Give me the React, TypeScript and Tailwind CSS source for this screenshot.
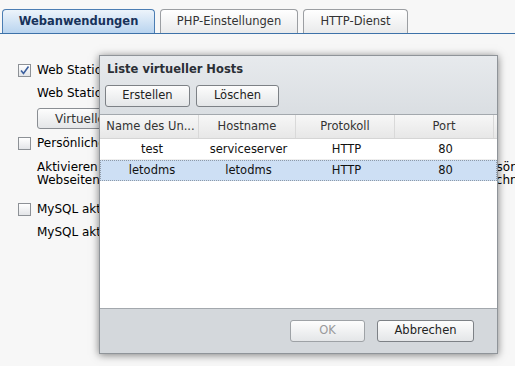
import React from "react";

function CheckBox({ checked }: { checked?: boolean }) {
  return (
    <span className="flex h-[13px] w-[13px] items-center justify-center border border-[#8d9196] bg-gradient-to-b from-[#ffffff] to-[#e3e5e8]">
      {checked && (
        <svg width="11" height="11" viewBox="0 0 11 11">
          <path d="M2 5.5 L4.5 8.5 L9.5 1.5" fill="none" stroke="#3b5f9e" strokeWidth="1.6" />
        </svg>
      )}
    </span>
  );
}

function Btn({ label, w, disabled }: { label: string; w: string; disabled?: boolean }) {
  return (
    <button
      className={
        "flex h-[22px] items-center justify-center rounded-[3px] border bg-gradient-to-b from-[#fdfdfd] to-[#e4e6e8] text-[11.5px] " +
        w +
        (disabled ? " border-[#9ea2a6] text-[#9a9a9a]" : " border-[#7d8186] text-[#222]")
      }
    >
      {label}
    </button>
  );
}

const cols = [
  { title: "Name des Un...", w: "w-[99px] pl-[3px]" },
  { title: "Hostname", w: "w-[97px]" },
  { title: "Protokoll", w: "w-[99px]" },
  { title: "Port", w: "w-[99px]" },
];

const rows = [
  ["test", "serviceserver", "HTTP", "80"],
  ["letodms", "letodms", "HTTP", "80"],
];

export default function App() {
  return (
    <div className="relative h-[366px] w-[515px] overflow-hidden bg-[#f7f7f7] font-['DejaVu_Sans',sans-serif] text-[12px] text-black">
      {/* tabs */}
      <div className="flex h-[34px] items-end gap-[5px] border-b border-[#3d72a9] pl-[2px]">
        <div className="flex h-[24px] w-[153px] items-center justify-center rounded-t-[4px] border border-b-0 border-[#4b7db3] bg-gradient-to-b from-[#edf4fb] to-[#b9d4ef] text-[11.5px] font-bold text-[#17325a]">
          Webanwendungen
        </div>
        <div className="flex h-[24px] w-[138px] items-center justify-center rounded-t-[4px] border border-b-0 border-[#9b9ea2] bg-gradient-to-b from-[#ffffff] to-[#e9eaeb] text-[11.5px] text-[#333]">
          PHP-Einstellungen
        </div>
        <div className="flex h-[24px] w-[105px] items-center justify-center rounded-t-[4px] border border-b-0 border-[#9b9ea2] bg-gradient-to-b from-[#ffffff] to-[#e9eaeb] text-[11.5px] text-[#333]">
          HTTP-Dienst
        </div>
      </div>

      {/* settings behind the dialog */}
      <div className="pl-[18px] whitespace-nowrap">
        <div className="mt-[29px] flex h-[14px] items-center gap-[6px]">
          <CheckBox checked />
          <span>Web Station aktivieren</span>
        </div>
        <div className="mt-[9px] h-[14px] pl-[19px] leading-[14px]">Web Station ist für Webhosting aktiviert.</div>
        <div className="mt-[8px] pl-[19px]">
          <button className="flex h-[21px] w-[122px] items-center justify-center rounded-[3px] border border-[#8a8e93] bg-gradient-to-b from-[#fdfdfd] to-[#e4e6e8] text-[12px] text-[#333]">
            Virtueller Host
          </button>
        </div>
        <div className="mt-[7px] flex h-[14px] items-center gap-[6px]">
          <CheckBox />
          <span>Persönliche Website aktivieren</span>
        </div>
        <div className="mt-[11px] pl-[19px] leading-[13px]">
          <div>Aktivieren Sie diese Option, damit die Benutzer der Gruppe ihre eigenen persönlichen</div>
          <div>Webseiten über den Unterordner www in ihrem persönlichen Benutzerverzeichnis</div>
        </div>
        <div className="mt-[15px] flex h-[14px] items-center gap-[6px]">
          <CheckBox />
          <span>MySQL aktivieren</span>
        </div>
        <div className="mt-[9px] h-[14px] pl-[19px] leading-[14px]">MySQL aktiviert die Datenbank</div>
      </div>

      {/* dialog */}
      <div className="absolute left-[99px] top-[55px] flex h-[299px] w-[399px] flex-col border border-[#8f9499] bg-[#dde1e5] text-[11.5px] shadow-[0_1px_8px_rgba(0,0,0,0.5)]">
        <div className="h-[58px] bg-gradient-to-b from-[#e7eaed] to-[#dadee2]">
          <div className="pl-[7px] pt-[6px] font-bold leading-[14px] text-[#2b2f36]">Liste virtueller Hosts</div>
          <div className="mt-[9px] flex gap-[6px] pl-[5px]">
            <Btn label="Erstellen" w="w-[85px]" />
            <Btn label="Löschen" w="w-[83px]" />
          </div>
        </div>
        <div className="flex flex-1 flex-col border-y border-[#a3a8ad] bg-white">
          <div className="flex h-[24px] border-b border-[#d5d5d5] bg-gradient-to-b from-[#f7f7f7] to-[#e7e7e7] text-[#333]">
            {cols.map((c) => (
              <div key={c.title} className={"flex items-center justify-center border-r border-[#d9d9d9] " + c.w}>
                {c.title}
              </div>
            ))}
          </div>
          {rows.map((r, i) => (
            <div
              key={i}
              className={
                "flex h-[21px] " +
                (i === 1 ? "border border-dotted border-[#8e9aa8] bg-[#cddff4]" : "border border-transparent border-b-[#eeeeee]")
              }
            >
              {r.map((v, j) => (
                <div key={j} className={"flex items-center justify-center text-[#111] " + cols[j].w}>
                  {v}
                </div>
              ))}
            </div>
          ))}
        </div>
        <div className="flex h-[44px] items-center justify-end gap-[12px] bg-[#d4d8dc] pr-[23px]">
          <Btn label="OK" w="w-[75px]" disabled />
          <Btn label="Abbrechen" w="w-[97px]" />
        </div>
      </div>
    </div>
  );
}
